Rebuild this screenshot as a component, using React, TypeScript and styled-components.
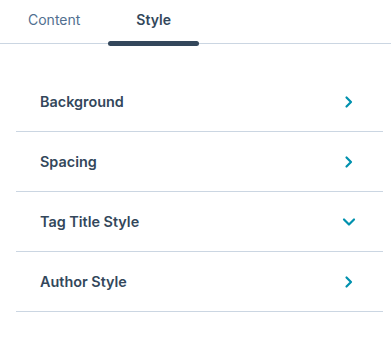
import React, { useState } from 'react';
import styled, { createGlobalStyle } from 'styled-components';

const GlobalStyle = createGlobalStyle`
  body {
    margin: 0;
    background: #ffffff;
    font-family: Inter, "Noto Sans", sans-serif;
  }
`;

const Panel = styled.div`
  width: 391px;
  height: 348px;
  background: #ffffff;
  box-sizing: border-box;
`;

const TabBar = styled.div`
  display: flex;
  height: 43px;
  border-bottom: 1px solid #cbd6e2;
  box-sizing: content-box;
`;

const Tab = styled.button<{ $active: boolean }>`
  position: relative;
  border: none;
  background: none;
  padding: 0 28px 4px;
  height: 43px;
  font-family: inherit;
  font-size: 14px;
  font-weight: ${(p) => (p.$active ? 600 : 400)};
  color: ${(p) => (p.$active ? '#33475b' : '#516f90')};
  cursor: pointer;

  &::after {
    content: '';
    display: ${(p) => (p.$active ? 'block' : 'none')};
    position: absolute;
    left: 0;
    right: 0;
    bottom: -3px;
    height: 5px;
    border-radius: 3px;
    background: #33475b;
  }
`;

const List = styled.div`
  display: flex;
  flex-direction: column;
  padding: 28px 8px 0 16px;
`;

const Row = styled.div`
  display: flex;
  align-items: center;
  justify-content: space-between;
  height: 59px;
  padding: 0 27px 0 24px;
  border-bottom: 1px solid #cbd6e2;
  cursor: pointer;
`;

const Label = styled.span`
  font-size: 14.4px;
  font-weight: 600;
  color: #33475b;
`;

const Chevron = ({ open }: { open: boolean }) => (
  <svg width="14" height="14" viewBox="0 0 14 14" fill="none">
    <path
      d={open ? 'M2 4.5 L7 9.5 L12 4.5' : 'M4.5 2.5 L9 7 L4.5 11.5'}
      stroke="#0091ae"
      strokeWidth="2.2"
      strokeLinecap="round"
      strokeLinejoin="round"
    />
  </svg>
);

const sections = ['Background', 'Spacing', 'Tag Title Style', 'Author Style'];

const App: React.FC = () => {
  const [tab, setTab] = useState('Style');
  const [open, setOpen] = useState('Tag Title Style');

  return (
    <Panel>
      <GlobalStyle />
      <TabBar>
        {['Content', 'Style'].map((t) => (
          <Tab key={t} $active={tab === t} onClick={() => setTab(t)}>
            {t}
          </Tab>
        ))}
      </TabBar>
      <List>
        {sections.map((s) => (
          <Row key={s} onClick={() => setOpen(open === s ? '' : s)}>
            <Label>{s}</Label>
            <Chevron open={open === s} />
          </Row>
        ))}
      </List>
    </Panel>
  );
};

export default App;
